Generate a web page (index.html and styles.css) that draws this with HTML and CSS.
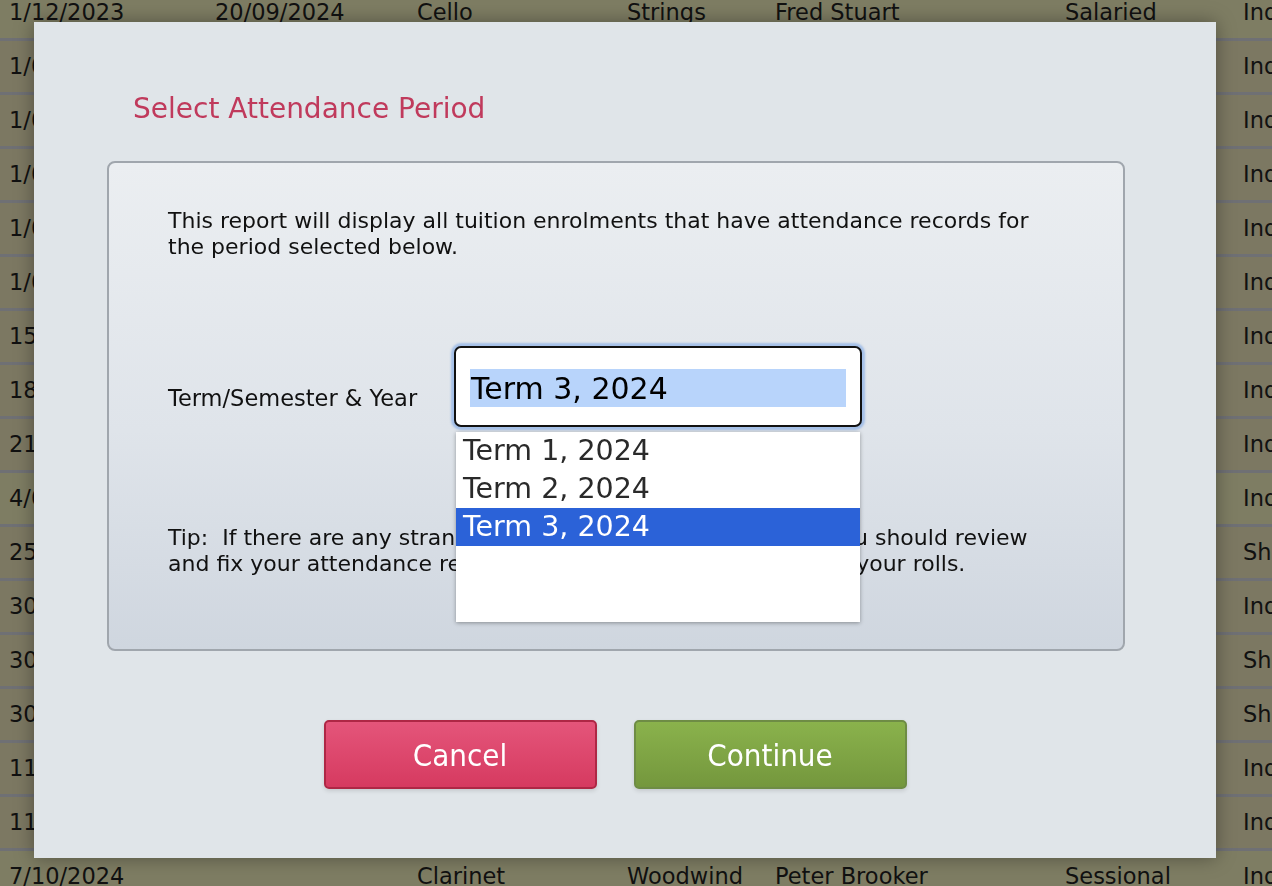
FILE: index.html
```html
<!DOCTYPE html>
<html>
<head>
    <title>Attendance Report</title>
    <link rel="stylesheet" href="styles.css">
</head>
<body>
    <div class="list">
        <div class="row alt"><span>1/12/2023</span><span>20/09/2024</span><span>Cello</span><span>Strings</span><span>Fred Stuart</span><span>Salaried</span><span>Individual</span></div>
        <div class="row"><span>1/02/2024</span><span>22/11/2024</span><span>Violin</span><span>Strings</span><span>Anna Wells</span><span>Salaried</span><span>Individual</span></div>
        <div class="row"><span>1/02/2024</span><span>22/11/2024</span><span>Viola</span><span>Strings</span><span>Anna Wells</span><span>Salaried</span><span>Individual</span></div>
        <div class="row"><span>1/02/2024</span><span>22/11/2024</span><span>Flute</span><span>Woodwind</span><span>Grace Hill</span><span>Sessional</span><span>Individual</span></div>
        <div class="row"><span>1/03/2024</span><span>22/11/2024</span><span>Piano</span><span>Keyboard</span><span>Mark Dunn</span><span>Salaried</span><span>Individual</span></div>
        <div class="row"><span>1/03/2024</span><span>22/11/2024</span><span>Trumpet</span><span>Brass</span><span>Lee Carter</span><span>Sessional</span><span>Individual</span></div>
        <div class="row"><span>15/03/2024</span><span>22/11/2024</span><span>Guitar</span><span>Strings</span><span>Tom Reid</span><span>Sessional</span><span>Individual</span></div>
        <div class="row"><span>18/03/2024</span><span>22/11/2024</span><span>Drums</span><span>Percussion</span><span>Sam Patel</span><span>Sessional</span><span>Individual</span></div>
        <div class="row"><span>21/03/2024</span><span>22/11/2024</span><span>Voice</span><span>Vocal</span><span>Kate Moss</span><span>Salaried</span><span>Individual</span></div>
        <div class="row alt"><span>4/04/2024</span><span>22/11/2024</span><span>Oboe</span><span>Woodwind</span><span>Peter Brooker</span><span>Sessional</span><span>Individual</span></div>
        <div class="row"><span>25/04/2024</span><span>22/11/2024</span><span>Saxophone</span><span>Woodwind</span><span>Peter Brooker</span><span>Sessional</span><span>Shared</span></div>
        <div class="row"><span>30/04/2024</span><span>22/11/2024</span><span>Cello</span><span>Strings</span><span>Fred Stuart</span><span>Salaried</span><span>Individual</span></div>
        <div class="row"><span>30/04/2024</span><span>22/11/2024</span><span>Trombone</span><span>Brass</span><span>Lee Carter</span><span>Sessional</span><span>Shared</span></div>
        <div class="row"><span>30/04/2024</span><span>22/11/2024</span><span>Clarinet</span><span>Woodwind</span><span>Peter Brooker</span><span>Sessional</span><span>Shared</span></div>
        <div class="row"><span>11/07/2024</span><span>22/11/2024</span><span>Violin</span><span>Strings</span><span>Anna Wells</span><span>Salaried</span><span>Individual</span></div>
        <div class="row"><span>11/07/2024</span><span>22/11/2024</span><span>Piano</span><span>Keyboard</span><span>Mark Dunn</span><span>Salaried</span><span>Individual</span></div>
        <div class="row alt"><span>7/10/2024</span><span></span><span>Clarinet</span><span>Woodwind</span><span>Peter Brooker</span><span>Sessional</span><span>Individual</span></div>
    </div>

    <div class="dialog">
        <h1 class="dialog-title">Select Attendance Period</h1>
        <div class="panel">
            <p class="intro">This report will display all tuition enrolments that have attendance records for the period selected below.</p>
            <div class="field">
                <label class="field-label">Term/Semester &amp; Year</label>
                <div class="picker">
                    <div class="picker-box"><span class="picker-value">Term 3, 2024</span></div>
                    <ul class="picker-menu">
                        <li>Term 1, 2024</li>
                        <li>Term 2, 2024</li>
                        <li class="selected">Term 3, 2024</li>
                    </ul>
                </div>
            </div>
            <p class="tip">Tip:&nbsp; If there are any strange results returned in this report, you should review<br>and fix your attendance records carefully before you print out your rolls.</p>
        </div>
        <div class="actions">
            <button class="btn btn-cancel">Cancel</button>
            <button class="btn btn-continue">Continue</button>
        </div>
    </div>
</body>
</html>
```

FILE: styles.css
```css
html, body {
    margin: 0;
    padding: 0;
    height: 100%;
    overflow: hidden;
}
body {
    font-family: "DejaVu Sans", Verdana, sans-serif;
    color: #111;
    background-color: #7d7962;
}

/* enrolment list behind the modal */
.list {
    margin-top: -13px;
}
.row {
    display: grid;
    grid-template-columns: 206px 202px 210px 148px 290px 178px 1fr;
    padding-left: 9px;
    height: 51px;
    border-bottom: 3px solid #6f7074;
    background-color: #7c7862;
    font-size: 22.5px;
    line-height: 51px;
    white-space: nowrap;
    overflow: hidden;
}
.row.alt {
    background-color: #7e7d63;
}
.row span {
    overflow: hidden;
}

/* modal */
.dialog {
    position: fixed;
    left: 34px;
    top: 22px;
    width: 1182px;
    height: 836px;
    box-sizing: border-box;
    padding: 69px 91px 0 73px;
    background-color: #e0e5e9;
    box-shadow: 0 0 18px rgba(0, 0, 0, 0.35);
}
.dialog-title {
    margin: 0 0 0 26px;
    font-size: 28px;
    line-height: 36px;
    font-weight: normal;
    color: #c03a5c;
}
.panel {
    margin-top: 34px;
    height: 490px;
    box-sizing: border-box;
    padding: 45px 0 0 59px;
    border: 2px solid #a0a6ad;
    border-radius: 8px;
    background: linear-gradient(to bottom, #ebeef1 0%, #dfe4ea 55%, #cfd6df 100%);
}
.intro, .tip {
    margin: 0;
    width: 880px;
    font-size: 22px;
    line-height: 26px;
}
.field {
    display: flex;
    align-items: center;
    margin-top: 86px;
}
.field-label {
    width: 286px;
    padding-top: 23px;
    font-size: 22.5px;
    line-height: 26px;
}
.picker {
    position: relative;
}
.picker-box {
    width: 408px;
    height: 81px;
    box-sizing: border-box;
    padding: 21px 14px;
    border: 2px solid #111;
    border-radius: 7px;
    background-color: #fff;
    box-shadow: 0 0 2px 3px rgba(105, 155, 230, 0.5);
}
.picker-value {
    display: block;
    height: 38px;
    padding-left: 1px;
    background-color: #b8d4fb;
    font-size: 30px;
    line-height: 40px;
    color: #000;
}
.picker-menu {
    position: absolute;
    top: 86px;
    left: 2px;
    width: 404px;
    height: 190px;
    margin: 0;
    padding: 0;
    list-style: none;
    background-color: #fff;
    box-shadow: 0 1px 4px rgba(0, 0, 0, 0.35);
    z-index: 10;
}
.picker-menu li {
    height: 38px;
    padding-left: 7px;
    font-size: 28.5px;
    line-height: 38px;
    color: #2a2a2a;
}
.picker-menu li.selected {
    background-color: #2b62d8;
    color: #fff;
}
.tip {
    margin-top: 98px;
}

.actions {
    display: flex;
    justify-content: center;
    gap: 37px;
    width: 1016px;
    margin-top: 69px;
}
.btn {
    width: 273px;
    height: 69px;
    border-radius: 5px;
    font-family: "DejaVu Sans Condensed", "DejaVu Sans", sans-serif;
    font-size: 31px;
    color: #fff;
    cursor: pointer;
    box-shadow: 0 2px 4px rgba(0, 0, 0, 0.12);
}
.btn-cancel {
    border: 2px solid #ae2745;
    background: linear-gradient(to bottom, #e4557a, #d63a60);
}
.btn-continue {
    border: 2px solid #6e8c45;
    background: linear-gradient(to bottom, #8ab24c, #74973d);
}
```
